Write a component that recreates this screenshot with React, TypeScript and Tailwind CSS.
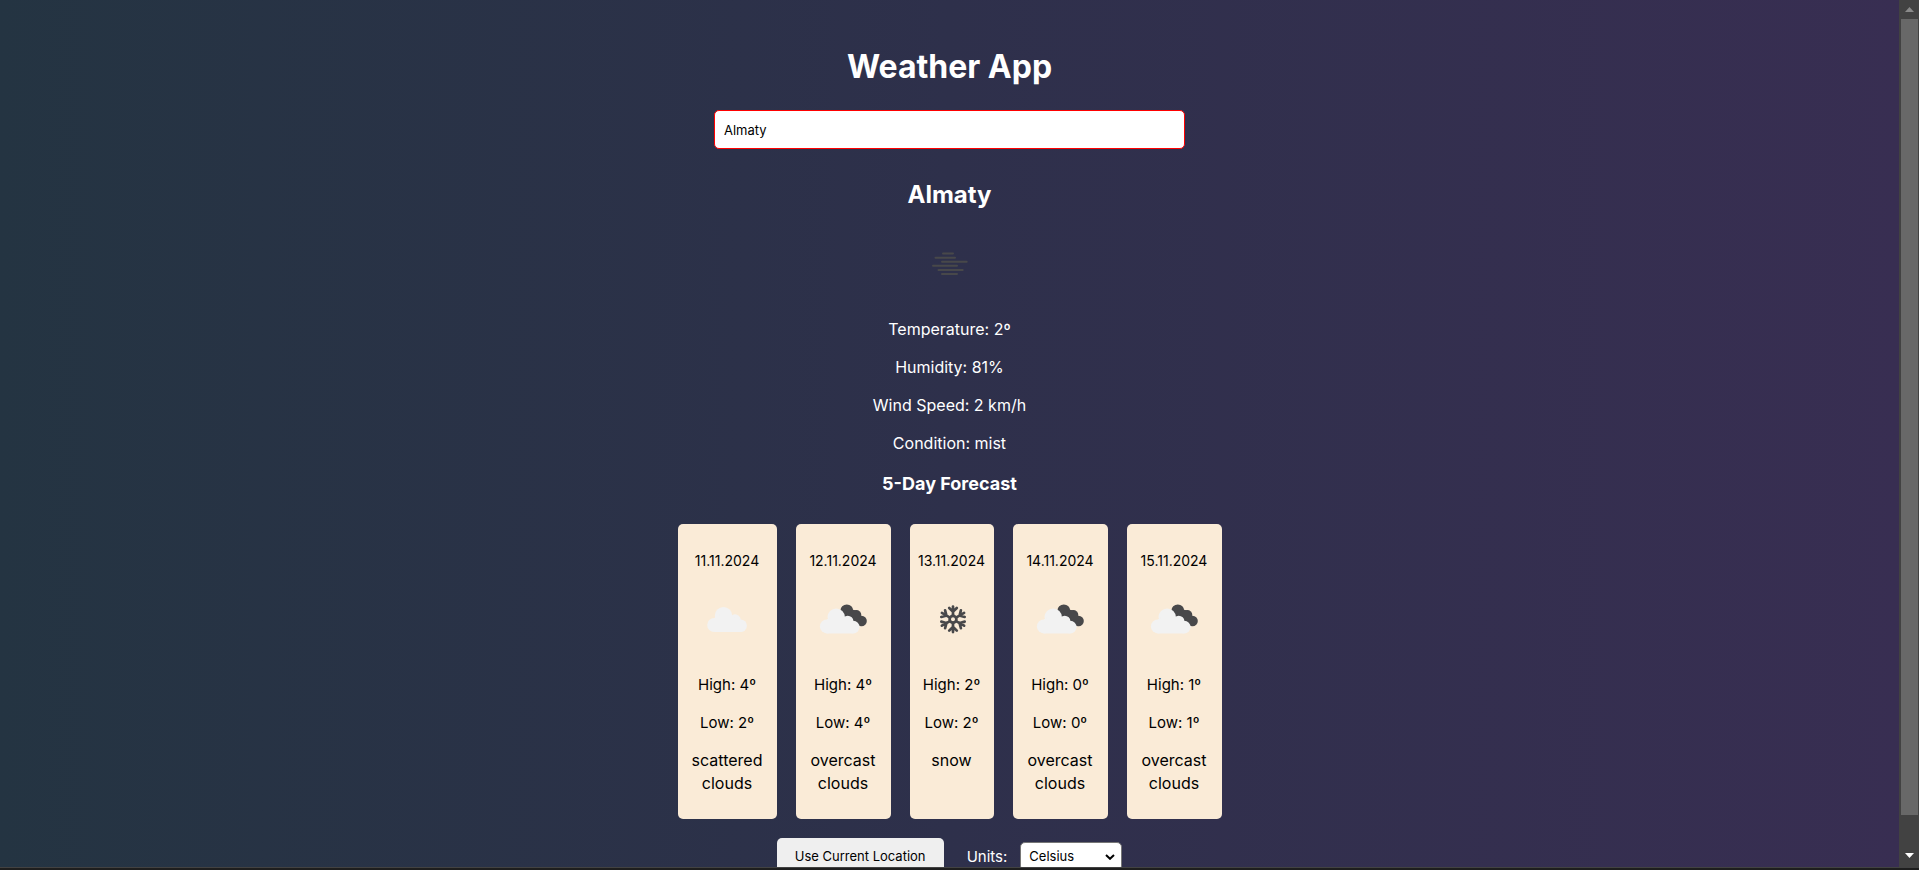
import React from "react";

type IconName = "cloud" | "overcast" | "snow" | "mist";

function CloudShape() {
  return (
    <g fill="#f2f2f2">
      <circle cx="17.2" cy="38" r="7" />
      <circle cx="26.5" cy="28.7" r="8.7" />
      <circle cx="38" cy="33" r="5.7" />
      <circle cx="43.6" cy="38.7" r="6.3" />
      <path d="M17.2 45H43.6V33L26 26L17.2 31Z" />
    </g>
  );
}

function WeatherIcon({ name }: { name: IconName }) {
  return (
    <svg width="60" height="71" viewBox="0 0 60 71" className="shrink-0" aria-hidden="true">
      {name === "cloud" && <CloudShape />}
      {name === "overcast" && (
        <>
          <g fill="#48484a">
            <circle cx="33.8" cy="23.9" r="6.5" />
            <circle cx="43.3" cy="28" r="5" />
            <circle cx="48.5" cy="34" r="5.3" />
            <path d="M33 21L43 23.5L52 33L46 39L34 31Z" />
          </g>
          <g transform="translate(-3.3 1.4)">
            <CloudShape />
          </g>
        </>
      )}
      {name === "snow" && (
        <g stroke="#48484a" strokeWidth="2.7" strokeLinecap="round" fill="none">
          {[0, 60, 120, 180, 240, 300].map((angle) => (
            <path
              key={angle}
              transform={`translate(31 32.3) rotate(${angle})`}
              d="M0 -3.5V-12.8M-3.8 -11.3L0 -7.6L3.8 -11.3"
            />
          ))}
          <circle cx="31" cy="32.3" r="3.4" />
        </g>
      )}
      {name === "mist" && (
        <path
          d="M24 21.5H34M16.5 25.7H36M23 29.8H47.7M14 33.8H38M19.5 38H43.7M23 42H38"
          stroke="#48484a"
          strokeWidth="2"
          strokeLinecap="round"
        />
      )}
    </svg>
  );
}

const days: { date: string; icon: IconName; high: number; low: number; text: string; width: string }[] = [
  { date: "11.11.2024", icon: "cloud", high: 4, low: 2, text: "scattered clouds", width: "w-[99px]" },
  { date: "12.11.2024", icon: "overcast", high: 4, low: 4, text: "overcast clouds", width: "w-[95px]" },
  { date: "13.11.2024", icon: "snow", high: 2, low: 2, text: "snow", width: "w-[84px]" },
  { date: "14.11.2024", icon: "overcast", high: 0, low: 0, text: "overcast clouds", width: "w-[95px]" },
  { date: "15.11.2024", icon: "overcast", high: 1, low: 1, text: "overcast clouds", width: "w-[95px]" },
];

function Scrollbar() {
  return (
    <div className="flex w-5 shrink-0 flex-col bg-[#424242]">
      <button aria-label="Scroll up" className="flex h-[19px] shrink-0 items-center justify-center">
        <svg width="9" height="5" viewBox="0 0 9 5" aria-hidden="true">
          <path d="M0 5L4.5 0L9 5Z" fill="#8a8a8a" />
        </svg>
      </button>
      <div className="mx-auto w-[17px] flex-1 bg-[#686868]" />
      <button aria-label="Scroll down" className="flex h-[52px] shrink-0 items-end justify-center pb-[9px]">
        <svg width="9" height="5" viewBox="0 0 9 5" aria-hidden="true">
          <path d="M0 0H9L4.5 5Z" fill="#ffffff" />
        </svg>
      </button>
    </div>
  );
}

export default function App() {
  return (
    <div className="flex h-screen flex-col bg-[#1e1e1e] font-['Inter',sans-serif] text-base leading-[23px]">
      <div className="flex min-h-0 flex-1">
        <main className="flex min-w-0 flex-1 flex-col items-center overflow-hidden bg-linear-to-r from-[#243442] via-[#2e304b] to-[#382e52] pt-11 text-white">
          <h1 className="text-[32px] font-bold leading-[46px]">Weather App</h1>
          <input
            type="text"
            aria-label="City"
            defaultValue="Almaty"
            className="mt-5 h-[39px] w-[471px] max-w-full shrink-0 rounded-[5px] border border-[#ff0000] bg-white px-[9px] text-[13px] text-black"
          />

          <section className="mt-7 flex shrink-0 flex-col items-center">
            <h2 className="mb-[19px] text-2xl font-bold leading-9">Almaty</h2>
            <div className="flex flex-col items-center gap-[15px]">
              <WeatherIcon name="mist" />
              <p>Temperature: 2º</p>
              <p>Humidity: 81%</p>
              <p>Wind Speed: 2 km/h</p>
              <p>Condition: mist</p>
              <h3 className="text-lg font-bold leading-[27px]">5-Day Forecast</h3>
            </div>
          </section>

          <section className="mt-[27px] flex shrink-0 gap-[19px]">
            {days.map((day) => (
              <article
                key={day.date}
                className={`${day.width} flex flex-col items-center gap-[15px] rounded-[5px] bg-[#faebd7] pt-[25px] pb-[24px] text-center text-black`}
              >
                <p className="text-sm leading-[23px]">{day.date}</p>
                <WeatherIcon name={day.icon} />
                <p className="text-[15px] leading-[23px]">High: {day.high}º</p>
                <p className="text-[15px] leading-[23px]">Low: {day.low}º</p>
                <p className="px-2">{day.text}</p>
              </article>
            ))}
          </section>

          <div className="mt-[19px] flex shrink-0 items-center">
            <button className="h-[37px] w-[167px] rounded-[5px] bg-[#efefef] text-[13px] text-black">
              Use Current Location
            </button>
            <label htmlFor="units" className="mr-[13px] ml-[23px] text-[15px]">
              Units:
            </label>
            <div className="relative">
              <select
                id="units"
                defaultValue="Celsius"
                className="h-[29px] w-[102px] appearance-none rounded-[5px] border border-[#767676] bg-white px-2 text-[13px] text-black"
              >
                <option>Celsius</option>
                <option>Fahrenheit</option>
              </select>
              <svg
                width="10"
                height="6"
                viewBox="0 0 10 6"
                className="pointer-events-none absolute top-3 right-[7px]"
                aria-hidden="true"
              >
                <path d="M1 1L5 4.8L9 1" fill="none" stroke="#000000" strokeWidth="2" />
              </svg>
            </div>
          </div>
        </main>
        <Scrollbar />
      </div>
      <div className="h-[3px] shrink-0 border-t border-[#424242] bg-[#1e1e1e]" />
    </div>
  );
}
